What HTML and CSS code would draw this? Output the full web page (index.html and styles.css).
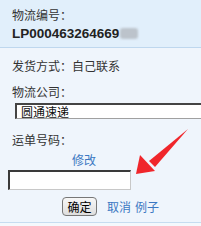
FILE: index.html
```html
<!DOCTYPE html>
<html lang="zh-CN">
<head>
  <meta charset="UTF-8" />
  <title>物流信息</title>
  <link rel="stylesheet" href="styles.css">
</head>
<body>
  <div class="panel">
    <div class="head">
      <div class="label">物流编号：</div>
      <div class="order-no">LP000463264669<span class="masked"></span></div>
    </div>

    <div class="content">
      <div class="row">发货方式：自己联系</div>
      <div class="row company">物流公司：</div>
      <div class="select-box">圆通速递</div>
      <div class="row waybill">运单号码：</div>
      <div class="row edit"><a href="#">修改</a></div>
      <input class="waybill-input" type="text" />
      <div class="actions">
        <button class="ok-btn">确定</button>
        <a href="#" class="cancel">取消</a>
        <a href="#">例子</a>
      </div>
    </div>

    <!-- red annotation arrow pointing at the input -->
    <svg class="arrow" width="201" height="226" viewBox="0 0 201 226">
      <path d="M188 129 L149 161 L155 167 Z" fill="#f0262b" />
      <path d="M136 174 L140 155 L155 171 Z" fill="#f0262b" />
    </svg>
  </div>
</body>
</html>
```

FILE: styles.css
```css
* {
  box-sizing: border-box;
  margin: 0;
  padding: 0;
}
body {
  width: 201px;
  height: 226px;
  overflow: hidden;
  font-family: "Noto Sans CJK SC", "Liberation Sans", sans-serif;
  font-size: 12px;
  color: #333;
  background-color: #f4f8fc;
}
.panel {
  position: relative;
  height: 223px;
  background-color: #eff5fc;
  border-bottom: 1px solid #c6dcf0;
}
.head {
  height: 48px;
  padding: 5px 12px 0;
  background-color: #e1effb;
  border-bottom: 1px solid #bed7ee;
}
.label {
  line-height: 20px;
}
.order-no {
  font-family: "Liberation Sans", Arial, sans-serif;
  font-weight: bold;
  font-size: 13.5px;
  line-height: 18px;
  color: #222;
}
.masked {
  display: inline-block;
  width: 18px;
  height: 11px;
  margin-left: 1px;
  vertical-align: -1px;
  background-color: #bcc3cb;
  border-radius: 3px;
  filter: blur(1px);
}
.content {
  padding: 8px 0 0 12px;
}
.row {
  line-height: 20px;
}
.company {
  margin-top: 6px;
}
.select-box {
  width: 186px;
  height: 16px;
  margin: 1px 0 0 3px;
  padding-left: 4px;
  line-height: 13px;
  color: #111;
  background-color: #fff;
  border-bottom: 1px solid #a0a0a0;
  border-top: 2px solid #444;
  border-left: 2px solid #444;
}
.waybill {
  margin-top: 11px;
}
.edit {
  padding-left: 60px;
}
a {
  color: #3b78c2;
  text-decoration: none;
}
.waybill-input {
  display: block;
  width: 123px;
  height: 20px;
  margin-left: -4px;
  background-color: #fff;
  border: 1px solid #c8c8c8;
  border-top: 2px solid #3a3a3a;
  border-left: 2px solid #3a3a3a;
}
.actions {
  display: flex;
  align-items: center;
  margin-top: 7px;
  padding-left: 50px;
}
.ok-btn {
  width: 35px;
  height: 19px;
  font-family: "Noto Sans CJK SC", sans-serif;
  font-size: 12px;
  line-height: 15px;
  color: #000;
  background: linear-gradient(#f7f7f7, #dedede);
  border: 1px solid #777;
  border-radius: 4px;
}
.cancel {
  margin: 0 4px 0 10px;
}
.arrow {
  position: absolute;
  left: 0;
  top: 0;
  pointer-events: none;
}
```
